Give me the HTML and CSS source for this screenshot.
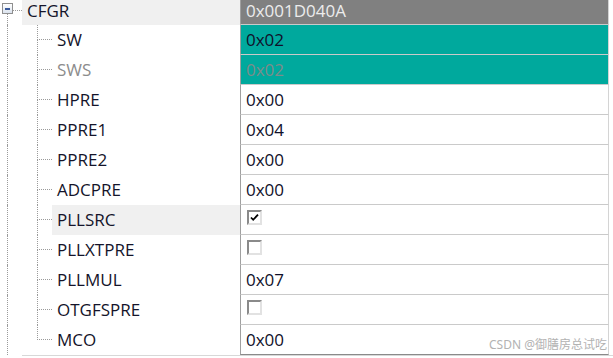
FILE: index.html
```html
<!DOCTYPE html>
<html lang="en">
<head>
  <meta charset="UTF-8" />
  <title>CFGR register view</title>
  <link rel="stylesheet" href="styles.css">
</head>
<body>
  <div class="tree">
    <div class="row top">
      <div class="name">
        <span class="root-col"><span class="toggle"></span><span class="root-line"></span></span>
        <span class="hline"></span>
        <span class="label sel">CFGR</span>
      </div>
      <div class="value head">0x001D040A</div>
    </div>

    <div class="row">
      <div class="name">
        <span class="trunk"></span>
        <span class="branch"><i></i><i></i></span>
        <span class="label">SW</span>
      </div>
      <div class="value teal">0x02</div>
    </div>

    <div class="row">
      <div class="name">
        <span class="trunk"></span>
        <span class="branch"><i></i><i></i></span>
        <span class="label dim">SWS</span>
      </div>
      <div class="value teal dim">0x02</div>
    </div>

    <div class="row">
      <div class="name">
        <span class="trunk"></span>
        <span class="branch"><i></i><i></i></span>
        <span class="label">HPRE</span>
      </div>
      <div class="value">0x00</div>
    </div>

    <div class="row">
      <div class="name">
        <span class="trunk"></span>
        <span class="branch"><i></i><i></i></span>
        <span class="label">PPRE1</span>
      </div>
      <div class="value">0x04</div>
    </div>

    <div class="row">
      <div class="name">
        <span class="trunk"></span>
        <span class="branch"><i></i><i></i></span>
        <span class="label">PPRE2</span>
      </div>
      <div class="value">0x00</div>
    </div>

    <div class="row">
      <div class="name">
        <span class="trunk"></span>
        <span class="branch"><i></i><i></i></span>
        <span class="label">ADCPRE</span>
      </div>
      <div class="value">0x00</div>
    </div>

    <div class="row">
      <div class="name">
        <span class="trunk"></span>
        <span class="branch"><i></i><i></i></span>
        <span class="label sel">PLLSRC</span>
      </div>
      <div class="value">
        <span class="check">
          <svg width="11" height="11" viewBox="0 0 11 11"><path d="M2 5.5 L4.2 7.8 L9 2.6" fill="none" stroke="#000" stroke-width="1.8"/></svg>
        </span>
      </div>
    </div>

    <div class="row">
      <div class="name">
        <span class="trunk"></span>
        <span class="branch"><i></i><i></i></span>
        <span class="label">PLLXTPRE</span>
      </div>
      <div class="value"><span class="check"></span></div>
    </div>

    <div class="row">
      <div class="name">
        <span class="trunk"></span>
        <span class="branch"><i></i><i></i></span>
        <span class="label">PLLMUL</span>
      </div>
      <div class="value">0x07</div>
    </div>

    <div class="row">
      <div class="name">
        <span class="trunk"></span>
        <span class="branch"><i></i><i></i></span>
        <span class="label">OTGFSPRE</span>
      </div>
      <div class="value"><span class="check"></span></div>
    </div>

    <div class="row last">
      <div class="name">
        <span class="trunk"></span>
        <span class="branch"><i></i><i></i></span>
        <span class="label">MCO</span>
      </div>
      <div class="value">0x00</div>
    </div>

    <div class="footer"></div>
  </div>

  <div class="watermark">CSDN @御膳房总试吃</div>
</body>
</html>
```

FILE: styles.css
```css
body {
  margin: 0;
  background-color: #ffffff;
  font-family: "Open Sans", "Noto Sans", sans-serif;
  font-size: 17px;
  color: #14142a;
  overflow: hidden;
}
.tree {
  width: 613px;
}
.row {
  display: flex;
  height: 30px;
}
.row.top {
  height: 25px;
}
.name {
  width: 240px;
  display: flex;
}
.label {
  flex: 1;
  display: flex;
  align-items: center;
  padding-left: 5px;
  padding-bottom: 1px;
}
.row.top .label,
.row.top .value {
  padding-bottom: 4px;
}
.label.sel {
  background-color: #f0f0f0;
}
.label.dim {
  color: #8c8c8c;
}

/* tree guide lines */
.root-col {
  width: 13px;
  display: flex;
  flex-direction: column;
  padding-top: 3px;
}
.toggle {
  width: 9px;
  height: 9px;
  margin-left: 2px;
  border: 1px solid #8f8f8f;
  background: linear-gradient(#ffffff, #dbe3ee);
  display: flex;
  align-items: center;
  justify-content: center;
}
.toggle::after {
  content: "";
  width: 5px;
  height: 2px;
  background-color: #3a5a9c;
}
.root-line {
  flex: 1;
  margin-left: 7px;
  border-left: 1px dotted #9a9a9a;
}
.hline {
  width: 9px;
  align-self: center;
  margin-top: -4px;
  border-top: 1px dotted #9a9a9a;
}
.trunk {
  width: 7px;
  border-right: 1px dotted #9a9a9a;
}
.branch {
  width: 15px;
  margin-left: 29px;
  display: flex;
  flex-direction: column;
}
.branch i:first-child {
  height: 14px;
  border-left: 1px dotted #9a9a9a;
  border-bottom: 1px dotted #9a9a9a;
}
.branch i:last-child {
  flex: 1;
  border-left: 1px dotted #9a9a9a;
}
.row.last .branch i:last-child {
  border-left: none;
}

/* value column */
.value {
  width: 369px;
  box-sizing: border-box;
  border-left: 1px solid #a0a0a0;
  border-right: 1px solid #d4d4d4;
  border-bottom: 1px solid #cacaca;
  padding-left: 5px;
  padding-bottom: 1px;
  display: flex;
  align-items: center;
  color: #10102a;
}
.value.head {
  background-color: #808080;
  color: #ececec;
}
.value.teal {
  background-color: #00a99d;
}
.value.teal.dim {
  color: #7c8c8a;
}
.row.last .value {
  border-bottom-color: #8a8a8a;
}
.check {
  width: 11px;
  height: 11px;
  margin-left: 1px;
  margin-top: -3px;
  border-top: 2px solid #8a8a8a;
  border-left: 2px solid #8a8a8a;
  border-right: 2px solid #e2e2e2;
  border-bottom: 2px solid #e2e2e2;
  background-color: #ffffff;
  display: flex;
}
.footer {
  margin-left: 22px;
  border-top: 1px solid #d8d8d8;
  height: 3px;
}

.watermark {
  position: absolute;
  right: 6px;
  bottom: 5px;
  font-family: "Noto Sans", "Noto Sans CJK SC", sans-serif;
  font-size: 12px;
  color: #b2b2b2;
}
```
